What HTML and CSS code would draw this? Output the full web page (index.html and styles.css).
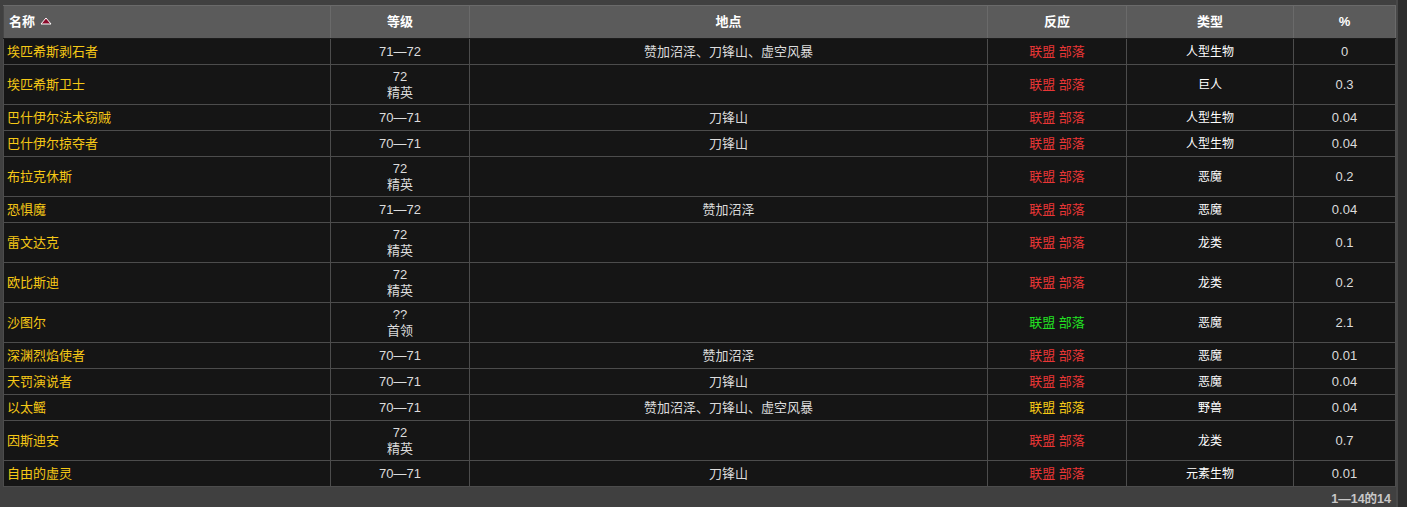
FILE: index.html
```html
<!DOCTYPE html>
<html lang="zh-CN">
<head>
<meta charset="utf-8">
<title>NPC</title>
<link rel="stylesheet" href="styles.css">
</head>
<body>
<div class="page">
  <main class="main">
    <table class="listview">
      <colgroup>
        <col class="c-name"><col class="c-level"><col class="c-loc"><col class="c-react"><col class="c-type"><col class="c-pct">
      </colgroup>
      <thead>
        <tr>
          <th class="left">名称 <svg class="sort" width="12" height="8" viewBox="0 0 12 8"><polygon points="6,1 11,7 1,7" fill="#8a0a2a" stroke="#ffffff" stroke-width="1"/></svg></th>
          <th>等级</th>
          <th>地点</th>
          <th>反应</th>
          <th>类型</th>
          <th>%</th>
        </tr>
      </thead>
      <tbody>
        <tr class="one"><td class="name">埃匹希斯剥石者</td><td>71—72</td><td>赞加沼泽、刀锋山、虚空风暴</td><td><span class="r">联盟</span> <span class="r">部落</span></td><td class="type">人型生物</td><td>0</td></tr>
        <tr class="two"><td class="name">埃匹希斯卫士</td><td>72<br>精英</td><td></td><td><span class="r">联盟</span> <span class="r">部落</span></td><td class="type">巨人</td><td>0.3</td></tr>
        <tr class="one"><td class="name">巴什伊尔法术窃贼</td><td>70—71</td><td>刀锋山</td><td><span class="r">联盟</span> <span class="r">部落</span></td><td class="type">人型生物</td><td>0.04</td></tr>
        <tr class="one"><td class="name">巴什伊尔掠夺者</td><td>70—71</td><td>刀锋山</td><td><span class="r">联盟</span> <span class="r">部落</span></td><td class="type">人型生物</td><td>0.04</td></tr>
        <tr class="two"><td class="name">布拉克休斯</td><td>72<br>精英</td><td></td><td><span class="r">联盟</span> <span class="r">部落</span></td><td class="type">恶魔</td><td>0.2</td></tr>
        <tr class="one"><td class="name">恐惧魔</td><td>71—72</td><td>赞加沼泽</td><td><span class="r">联盟</span> <span class="r">部落</span></td><td class="type">恶魔</td><td>0.04</td></tr>
        <tr class="two"><td class="name">雷文达克</td><td>72<br>精英</td><td></td><td><span class="r">联盟</span> <span class="r">部落</span></td><td class="type">龙类</td><td>0.1</td></tr>
        <tr class="two"><td class="name">欧比斯迪</td><td>72<br>精英</td><td></td><td><span class="r">联盟</span> <span class="r">部落</span></td><td class="type">龙类</td><td>0.2</td></tr>
        <tr class="two"><td class="name">沙图尔</td><td>??<br>首领</td><td></td><td><span class="g">联盟</span> <span class="g">部落</span></td><td class="type">恶魔</td><td>2.1</td></tr>
        <tr class="one"><td class="name">深渊烈焰使者</td><td>70—71</td><td>赞加沼泽</td><td><span class="r">联盟</span> <span class="r">部落</span></td><td class="type">恶魔</td><td>0.01</td></tr>
        <tr class="one"><td class="name">天罚演说者</td><td>70—71</td><td>刀锋山</td><td><span class="r">联盟</span> <span class="r">部落</span></td><td class="type">恶魔</td><td>0.04</td></tr>
        <tr class="one"><td class="name">以太鳐</td><td>70—71</td><td>赞加沼泽、刀锋山、虚空风暴</td><td><span class="y">联盟</span> <span class="y">部落</span></td><td class="type">野兽</td><td>0.04</td></tr>
        <tr class="two"><td class="name">因斯迪安</td><td>72<br>精英</td><td></td><td><span class="r">联盟</span> <span class="r">部落</span></td><td class="type">龙类</td><td>0.7</td></tr>
        <tr class="one"><td class="name">自由的虚灵</td><td>70—71</td><td>刀锋山</td><td><span class="r">联盟</span> <span class="r">部落</span></td><td class="type">元素生物</td><td>0.01</td></tr>
      </tbody>
    </table>
    <div class="footer">1—14的14</div>
  </main>
  <aside class="track"></aside>
</div>
</body>
</html>
```

FILE: styles.css
```css
html, body {
  margin: 0;
  padding: 0;
  background: #404040;
  font-family: "Liberation Sans", "Noto Sans CJK SC", sans-serif;
  font-size: 13px;
  color: #dcdcdc;
}

.page {
  display: flex;
  height: 507px;
  overflow: hidden;
}

.main {
  flex: 1;
  padding: 5px 0 0 3px;
}

.track {
  width: 9px;
  background: #2e2e2e;
  border-left: 2px solid #484848;
}

.listview {
  width: 1393px;
  table-layout: fixed;
  border-collapse: collapse;
  background: #151515;
}

.c-name { width: 327px; }
.c-level { width: 139px; }
.c-loc { width: 518px; }
.c-react { width: 139px; }
.c-type { width: 167px; }
.c-pct { width: 102px; }

.listview th {
  background: #5b5b5b;
  color: #ffffff;
  font-weight: bold;
  height: 32px;
  padding: 0 6px;
  line-height: 16px;
  text-align: center;
  border: 1px solid #6a6a6a;
  border-bottom-color: #1c1c1c;
  border-left-color: #474747;
}

.listview th.left {
  text-align: left;
  padding-left: 5px;
}

.sort {
  vertical-align: 1px;
  margin-left: 1px;
}

.listview td {
  border: 1px solid #4c4c4c;
  padding: 0 6px;
  text-align: center;
  line-height: 16px;
  vertical-align: middle;
  color: #dcdcdc;
}

.listview tr.one td {
  padding-top: 5px;
  padding-bottom: 4px;
}

.listview tr.two td {
  padding-top: 4px;
  padding-bottom: 3px;
}

.listview td.name {
  text-align: left;
  color: #f5c816;
  padding-left: 3px;
}

.listview td.type {
  color: #ffffff;
  font-size: 12px;
}

.r { color: #e83636; }
.g { color: #22e022; }
.y { color: #f5c816; }

.footer {
  text-align: right;
  font-size: 12.5px;
  font-weight: bold;
  color: #c8c8c8;
  padding: 5px 5px 0 0;
  line-height: 14px;
}
```
